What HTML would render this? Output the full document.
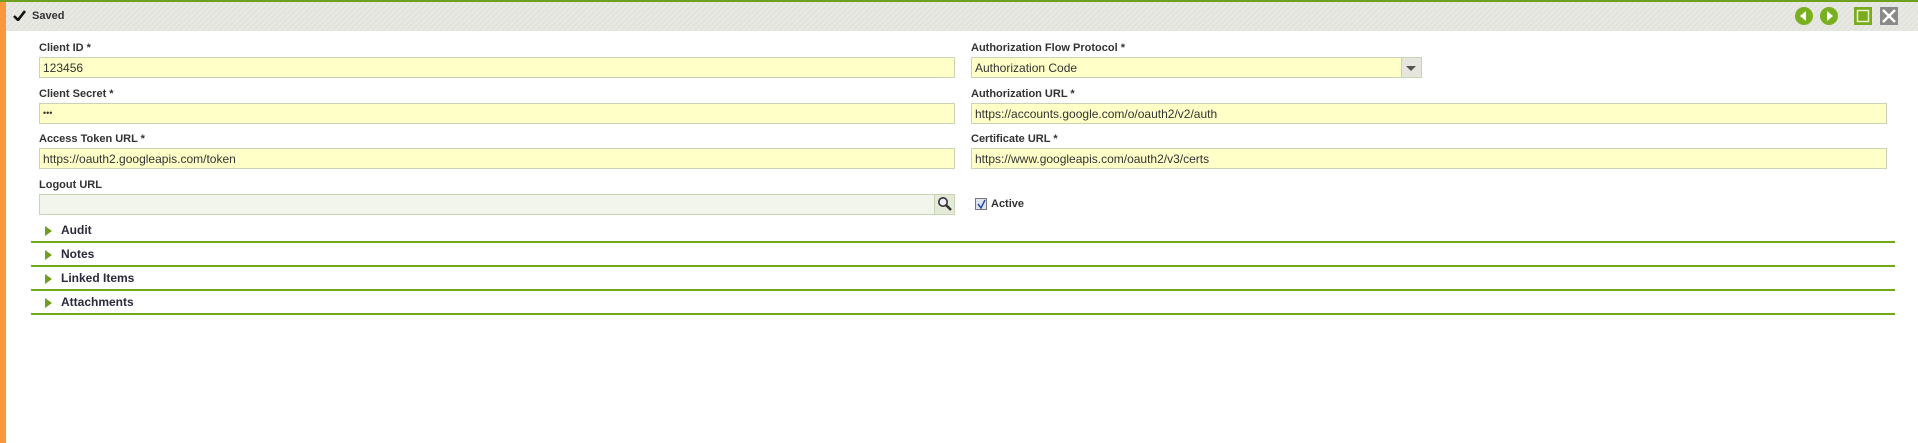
<!DOCTYPE html>
<html><head><style>
*{box-sizing:border-box;margin:0;padding:0}
body{width:1918px;height:443px;background:#fff;font-family:"Liberation Sans",sans-serif;position:relative;overflow:hidden}
.abs{position:absolute}
.orange{left:0;top:2px;width:6px;height:441px;background:#f7983a}
.topline{left:0;top:0;width:1918px;height:2px;background:#6ea01e}
.hdr{left:6px;top:2px;width:1912px;height:29px;background:repeating-linear-gradient(135deg,#e9e9e4 0 2px,#e3e3dd 2px 4px)}
.lbl{font-size:11px;font-weight:bold;color:#333}
.inp{height:21px;border:1px solid #c8d4b4;background:#ffffc8;font-size:12px;color:#333;padding:3px 0 0 3px}
.sec{left:31px;width:1864px;height:2px;background:#72a81a}
.st{left:61px;font-size:12px;font-weight:bold;color:#2a2a3a}
.tri{left:45px;width:0;height:0;border-left:7px solid #6ea01e;border-top:5px solid transparent;border-bottom:5px solid transparent}
</style></head><body>
<div class="abs topline"></div>
<div class="abs hdr"></div>
<div class="abs orange"></div>
<svg class="abs" style="left:13px;top:10px" width="13" height="11" viewBox="0 0 13 11"><path d="M1 6 L5 10 L12 1" stroke="#111" stroke-width="2.6" fill="none"/></svg>
<div class="abs lbl" style="left:32px;top:10px;font-size:11px">Saved</div>
<svg class="abs" style="left:1794px;top:6px" width="20" height="20"><circle cx="10" cy="10" r="9" fill="#7ab020"/><path d="M12 5 L6 10 L12 15Z" fill="#fff"/></svg>
<svg class="abs" style="left:1819px;top:6px" width="20" height="20"><circle cx="10" cy="10" r="9" fill="#7ab020"/><path d="M8 5 L14 10 L8 15Z" fill="#fff"/></svg>
<svg class="abs" style="left:1854px;top:7px" width="18" height="18"><rect width="18" height="18" fill="#78ac1e"/><rect x="3.5" y="3.5" width="11" height="11" fill="none" stroke="#e8f4c8" stroke-width="1.5"/></svg>
<svg class="abs" style="left:1880px;top:7px" width="18" height="18"><rect width="18" height="18" fill="#8a8a8a"/><path d="M3 3 L15 15 M15 3 L3 15" stroke="#fff" stroke-width="2.4"/></svg>

<div class="abs lbl" style="left:39px;top:42px">Client ID *</div>
<div class="abs inp" style="left:39px;top:57px;width:916px">123456</div>
<div class="abs lbl" style="left:39px;top:88px">Client Secret *</div>
<div class="abs inp" style="left:39px;top:103px;width:916px;font-size:9px;padding-top:4px">•••</div>
<div class="abs lbl" style="left:39px;top:133px">Access Token URL *</div>
<div class="abs inp" style="left:39px;top:148px;width:916px">https://oauth2.googleapis.com/token</div>
<div class="abs lbl" style="left:39px;top:179px">Logout URL</div>
<div class="abs inp" style="left:39px;top:194px;width:916px;background:#f2f5ec"></div>
<div class="abs" style="left:934px;top:194px;width:21px;height:21px;border:1px solid #c8d4b4;background:#e4ead8"></div>
<svg class="abs" style="left:937px;top:196px" width="16" height="16"><circle cx="6" cy="6" r="4.2" fill="#eef" stroke="#333" stroke-width="1.6"/><path d="M9 9 L14 14" stroke="#333" stroke-width="2.6"/></svg>

<div class="abs lbl" style="left:971px;top:42px">Authorization Flow Protocol *</div>
<div class="abs inp" style="left:971px;top:57px;width:451px">Authorization Code</div>
<div class="abs" style="left:1401px;top:58px;width:20px;height:19px;background:#e6e6de;border-left:1px solid #ccc"></div>
<div class="abs" style="left:1406px;top:66px;border-top:5px solid #555;border-left:5px solid transparent;border-right:5px solid transparent"></div>
<div class="abs lbl" style="left:971px;top:88px">Authorization URL *</div>
<div class="abs inp" style="left:971px;top:103px;width:916px">https://accounts.google.com/o/oauth2/v2/auth</div>
<div class="abs lbl" style="left:971px;top:133px">Certificate URL *</div>
<div class="abs inp" style="left:971px;top:148px;width:916px">https://www.googleapis.com/oauth2/v3/certs</div>
<div class="abs" style="left:975px;top:198px;width:12px;height:12px;border:1px solid #777;background:#dde4f0"></div>
<svg class="abs" style="left:976px;top:199px" width="11" height="11"><path d="M2 5 L5 9 L9 1" stroke="#2a4aa0" stroke-width="1.5" fill="none"/></svg>
<div class="abs lbl" style="left:991px;top:198px">Active</div>

<div class="abs tri" style="top:226px"></div><div class="abs st" style="top:223px">Audit</div>
<div class="abs sec" style="top:241px"></div>
<div class="abs tri" style="top:250px"></div><div class="abs st" style="top:247px">Notes</div>
<div class="abs sec" style="top:265px"></div>
<div class="abs tri" style="top:274px"></div><div class="abs st" style="top:271px">Linked Items</div>
<div class="abs sec" style="top:289px"></div>
<div class="abs tri" style="top:298px"></div><div class="abs st" style="top:295px">Attachments</div>
<div class="abs sec" style="top:313px"></div>
</body></html>
